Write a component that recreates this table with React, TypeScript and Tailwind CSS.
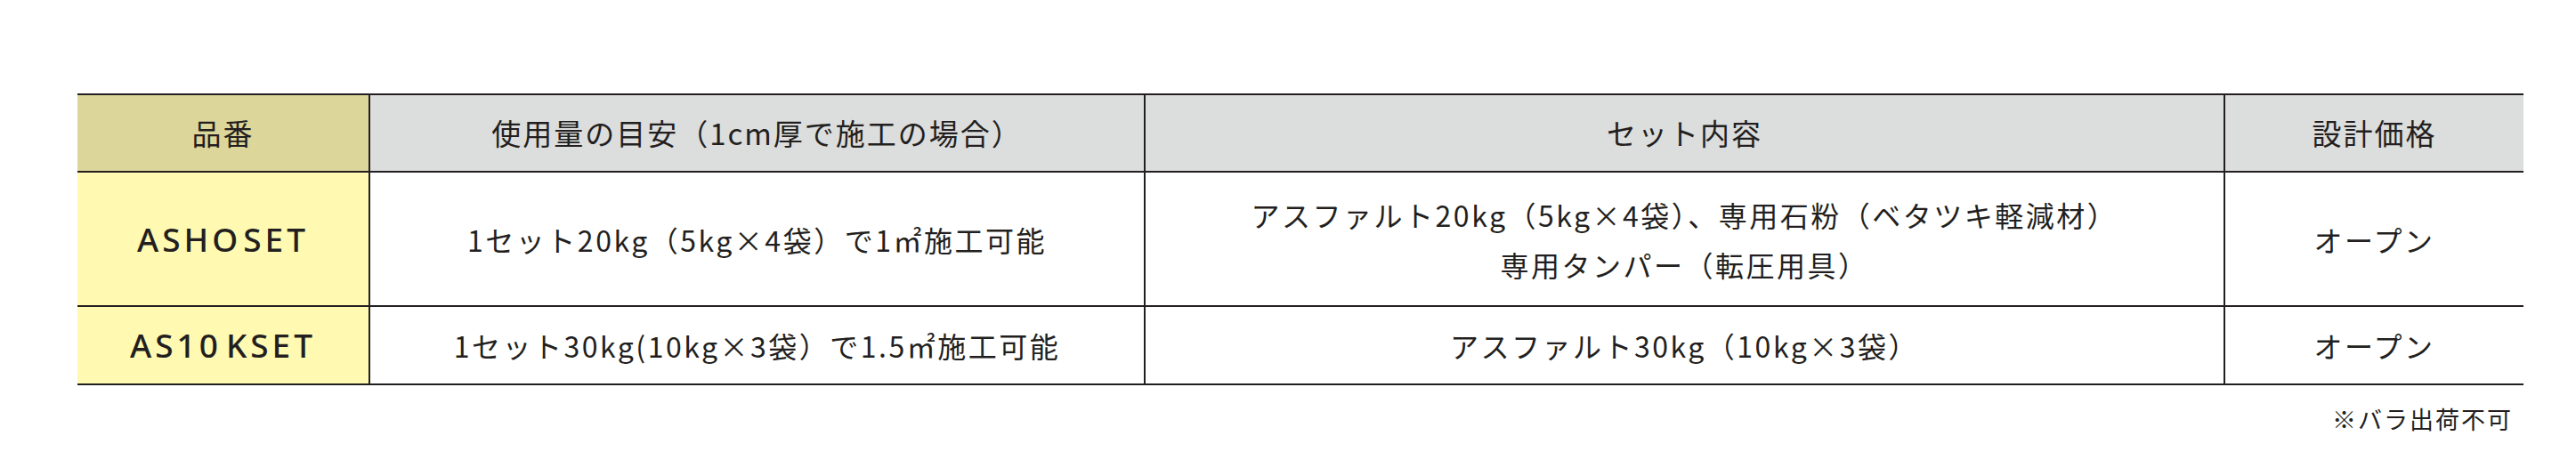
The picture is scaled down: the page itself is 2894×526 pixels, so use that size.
const font = "font-['Noto_Sans_CJK_JP','Noto_Sans',sans-serif]";

type Row = {
  code: React.ReactNode;
  usage: string;
  contents: string[];
  price: string;
  height: string;
};

const rows: Row[] = [
  {
    code: (
      <>
        ASHO<span className="ml-[2px]">SET</span>
      </>
    ),
    usage: "1セット20kg（5kg×4袋）で1㎡施工可能",
    contents: ["アスファルト20kg（5kg×4袋）、専用石粉（ベタツキ軽減材）", "専用タンパー（転圧用具）"],
    price: "オープン",
    height: "h-[151px]",
  },
  {
    code: (
      <>
        AS10<span className="ml-[5px]">KSET</span>
      </>
    ),
    usage: "1セット30kg(10kg×3袋）で1.5㎡施工可能",
    contents: ["アスファルト30kg（10kg×3袋）"],
    price: "オープン",
    height: "h-[88px]",
  },
];

const grid = "grid grid-cols-[329px_871px_1213px_335px] border-b-2 border-[#231f20]";
const cell = "flex items-center justify-center border-r-2 border-[#231f20]";

export default function App() {
  return (
    <div className={`w-[2894px] h-[526px] bg-white pt-[105px] pl-[87px] text-[#231f20] ${font}`}>
      <div className="w-[2748px] border-t-2 border-[#231f20]">
        <div className={`${grid} h-[87px] text-[33px] tracking-[2px]`}>
          <div className={`${cell} bg-[#ddd69b]`}>品番</div>
          <div className={`${cell} bg-[#dcdddd]`}>使用量の目安（1cm厚で施工の場合）</div>
          <div className={`${cell} bg-[#dcdddd]`}>セット内容</div>
          <div className="flex items-center justify-center bg-[#dcdddd]">設計価格</div>
        </div>

        {rows.map((row, i) => (
          <div key={i} className={`${grid} ${row.height} text-[32px] tracking-[2.5px]`}>
            <div className={`${cell} bg-[#fff9b1] font-['Noto_Sans',sans-serif] font-medium text-[37px] tracking-[4px]`}>
              {row.code}
            </div>
            <div className={cell}>{row.usage}</div>
            <div className={`${cell} flex-col leading-[56px]`}>
              {row.contents.map((line) => (
                <span key={line}>{line}</span>
              ))}
            </div>
            <div className="flex items-center justify-center">{row.price}</div>
          </div>
        ))}
      </div>
      <p className="w-[2748px] mt-[20px] pr-[12px] text-right text-[27px] tracking-[2px] leading-[36px]">
        ※バラ出荷不可
      </p>
    </div>
  );
}
